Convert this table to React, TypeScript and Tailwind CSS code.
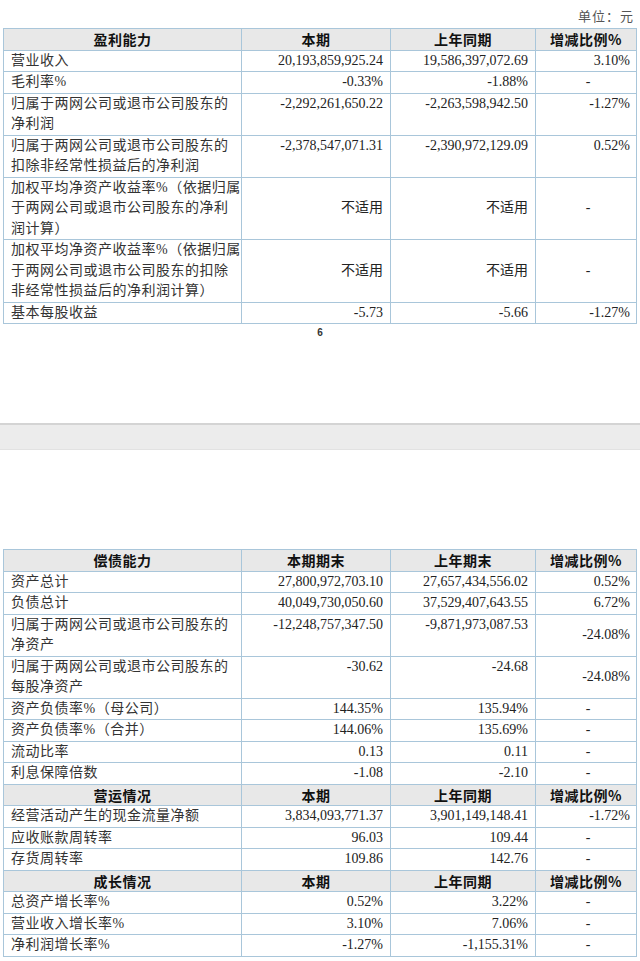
import React from "react";

type Row = {
  label: string | string[];
  cur: string;
  prev: string;
  ratio: string;
  valign?: "top" | "middle";
  ratioMiddle?: boolean;
};

type Section = {
  head: [string, string, string, string];
  rows: Row[];
};

const profit: Section[] = [
  {
    head: ["盈利能力", "本期", "上年同期", "增减比例%"],
    rows: [
      { label: "营业收入", cur: "20,193,859,925.24", prev: "19,586,397,072.69", ratio: "3.10%" },
      { label: "毛利率%", cur: "-0.33%", prev: "-1.88%", ratio: "-" },
      {
        label: ["归属于两网公司或退市公司股东的", "净利润"],
        cur: "-2,292,261,650.22",
        prev: "-2,263,598,942.50",
        ratio: "-1.27%",
      },
      {
        label: ["归属于两网公司或退市公司股东的", "扣除非经常性损益后的净利润"],
        cur: "-2,378,547,071.31",
        prev: "-2,390,972,129.09",
        ratio: "0.52%",
      },
      {
        label: ["加权平均净资产收益率%（依据归属", "于两网公司或退市公司股东的净利", "润计算）"],
        cur: "不适用",
        prev: "不适用",
        ratio: "-",
        valign: "middle",
      },
      {
        label: ["加权平均净资产收益率%（依据归属", "于两网公司或退市公司股东的扣除", "非经常性损益后的净利润计算）"],
        cur: "不适用",
        prev: "不适用",
        ratio: "-",
        valign: "middle",
      },
      { label: "基本每股收益", cur: "-5.73", prev: "-5.66", ratio: "-1.27%" },
    ],
  },
];

const debt: Section[] = [
  {
    head: ["偿债能力", "本期期末", "上年期末", "增减比例%"],
    rows: [
      { label: "资产总计", cur: "27,800,972,703.10", prev: "27,657,434,556.02", ratio: "0.52%" },
      { label: "负债总计", cur: "40,049,730,050.60", prev: "37,529,407,643.55", ratio: "6.72%" },
      {
        label: ["归属于两网公司或退市公司股东的", "净资产"],
        cur: "-12,248,757,347.50",
        prev: "-9,871,973,087.53",
        ratio: "-24.08%",
        ratioMiddle: true,
      },
      {
        label: ["归属于两网公司或退市公司股东的", "每股净资产"],
        cur: "-30.62",
        prev: "-24.68",
        ratio: "-24.08%",
        ratioMiddle: true,
      },
      { label: "资产负债率%（母公司）", cur: "144.35%", prev: "135.94%", ratio: "-" },
      { label: "资产负债率%（合并）", cur: "144.06%", prev: "135.69%", ratio: "-" },
      { label: "流动比率", cur: "0.13", prev: "0.11", ratio: "-" },
      { label: "利息保障倍数", cur: "-1.08", prev: "-2.10", ratio: "-" },
    ],
  },
  {
    head: ["营运情况", "本期", "上年同期", "增减比例%"],
    rows: [
      { label: "经营活动产生的现金流量净额", cur: "3,834,093,771.37", prev: "3,901,149,148.41", ratio: "-1.72%" },
      { label: "应收账款周转率", cur: "96.03", prev: "109.44", ratio: "-" },
      { label: "存货周转率", cur: "109.86", prev: "142.76", ratio: "-" },
    ],
  },
  {
    head: ["成长情况", "本期", "上年同期", "增减比例%"],
    rows: [
      { label: "总资产增长率%", cur: "0.52%", prev: "3.22%", ratio: "-" },
      { label: "营业收入增长率%", cur: "3.10%", prev: "7.06%", ratio: "-" },
      { label: "净利润增长率%", cur: "-1.27%", prev: "-1,155.31%", ratio: "-" },
    ],
  },
];

function DataTable({ sections }: { sections: Section[] }) {
  return (
    <table className="ml-[3px] w-[633px] table-fixed border-collapse text-[14px] leading-[20.5px] text-[#222]">
      <colgroup>
        <col className="w-[238px]" />
        <col className="w-[149px]" />
        <col className="w-[145px]" />
        <col className="w-[101px]" />
      </colgroup>
      <tbody>
        {sections.map((sec, si) => (
          <React.Fragment key={si}>
            <tr className="bg-[#e8e8e8] font-bold text-[#111]">
              {sec.head.map((h, hi) => (
                <td
                  key={hi}
                  className="border border-[#a9c6da] p-0 text-center font-['Noto_Sans_CJK_SC',sans-serif] tracking-[0.5px]"
                >
                  {h}
                </td>
              ))}
            </tr>
            {sec.rows.map((r, ri) => {
              const mid = r.valign === "middle";
              const lines = Array.isArray(r.label) ? r.label : [r.label];
              return (
                <tr key={ri}>
                  <td className="whitespace-nowrap border border-[#a9c6da] py-0 pl-[7px] pr-0 align-top font-['Liberation_Serif','Noto_Sans_CJK_SC',serif] tracking-[0.5px] text-[#333]">
                    {lines.map((l, li) => (
                      <div key={li}>{l}</div>
                    ))}
                  </td>
                  <td
                    className={`border border-[#a9c6da] py-0 pl-1 pr-[7px] text-right font-['Liberation_Serif','Noto_Sans_CJK_SC',serif] ${
                      mid ? "align-middle" : "align-top"
                    }`}
                  >
                    {r.cur}
                  </td>
                  <td
                    className={`border border-[#a9c6da] py-0 pl-1 pr-[7px] text-right font-['Liberation_Serif','Noto_Sans_CJK_SC',serif] ${
                      mid ? "align-middle" : "align-top"
                    }`}
                  >
                    {r.prev}
                  </td>
                  <td
                    className={`border border-[#a9c6da] py-0 pl-1 font-['Liberation_Serif','Noto_Sans_CJK_SC',serif] ${
                      r.ratio === "-" ? "text-center" : "pr-[6px] text-right"
                    } ${mid || r.ratioMiddle ? "align-middle" : "align-top"}`}
                  >
                    {r.ratio}
                  </td>
                </tr>
              );
            })}
          </React.Fragment>
        ))}
      </tbody>
    </table>
  );
}

export default function App() {
  return (
    <div className="h-[961px] w-[640px] overflow-hidden bg-white">
      <div className="h-[423px] bg-white">
        <div className="flex h-[28px] items-center justify-end pr-[6px] pt-[4px] font-['Noto_Sans_CJK_SC',sans-serif] text-[13px] tracking-[1px] text-[#555]">
          单位：元
        </div>
        <DataTable sections={profit} />
        <div className="mt-[2px] text-center font-['Liberation_Sans',sans-serif] text-[10px] font-bold leading-[14px] text-[#333]">
          6
        </div>
      </div>
      <div className="h-[27px] border-t-2 border-b border-t-[#d4d4d4] border-b-[#e2e2e2] bg-[#ececec]" />
      <div className="h-[99px]" />
      <DataTable sections={debt} />
    </div>
  );
}
